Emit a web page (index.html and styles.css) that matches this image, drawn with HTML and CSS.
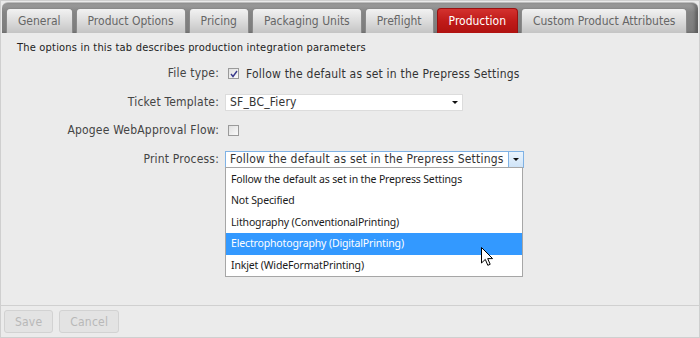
FILE: index.html
```html
<!DOCTYPE html>
<html lang="en">
<head>
  <meta charset="UTF-8">
  <title>Production</title>
  <link rel="stylesheet" href="styles.css">
</head>
<body>
  <div class="panel">
    <div class="tabbar">
      <div class="tab">General</div>
      <div class="tab">Product Options</div>
      <div class="tab">Pricing</div>
      <div class="tab">Packaging Units</div>
      <div class="tab">Preflight</div>
      <div class="tab active">Production</div>
      <div class="tab">Custom Product Attributes</div>
    </div>

    <div class="content">
      <div class="intro">The options in this tab describes production integration parameters</div>

      <div class="form">
        <div class="label">File type:</div>
        <div class="field">
          <span class="check checked">
            <svg width="8" height="8" viewBox="0 0 8 8"><path d="M1 4 L3 6.5 L7 1" fill="none" stroke="#3a3a8c" stroke-width="1.4"/></svg>
          </span>
          <span>Follow the default as set in the Prepress Settings</span>
        </div>

        <div class="label">Ticket Template:</div>
        <div class="field">
          <div class="select ticket">
            <span class="value">SF_BC_Fiery</span>
            <span class="arrow"></span>
          </div>
        </div>

        <div class="label">Apogee WebApproval Flow:</div>
        <div class="field">
          <span class="check"></span>
        </div>

        <div class="label">Print Process:</div>
        <div class="field">
          <div class="select process open">
            <span class="value">Follow the default as set in the Prepress Settings</span>
            <span class="button"><span class="arrow"></span></span>
            <ul class="options">
              <li>Follow the default as set in the Prepress Settings</li>
              <li>Not Specified</li>
              <li>Lithography (ConventionalPrinting)</li>
              <li class="hover">Electrophotography (DigitalPrinting)</li>
              <li>Inkjet (WideFormatPrinting)</li>
            </ul>
            <svg class="cursor" width="13" height="20" viewBox="0 0 13 20">
              <path d="M0.5 0.5 L0.5 16 L4.3 12.4 L6.8 18.3 L9.2 17.3 L6.7 11.6 L11.6 11.6 Z" fill="#fff" stroke="#000" stroke-width="1"/>
            </svg>
          </div>
        </div>
      </div>
    </div>

    <div class="buttons">
      <button disabled>Save</button>
      <button disabled>Cancel</button>
    </div>
  </div>
</body>
</html>
```

FILE: styles.css
```css
body {
  margin: 0;
  padding: 0;
  background: #ffffff;
  font-family: "DejaVu Sans Condensed", "DejaVu Sans", sans-serif;
  font-size: 12px;
  letter-spacing: 0.2px;
  color: #333333;
}
.panel {
  width: 698px;
  height: 336px;
  border: 1px solid #cfcfcf;
  background: #ebebeb;
  display: flex;
  flex-direction: column;
}
.tabbar {
  margin: 1px 1px 0 1px;
  height: 30px;
  border-radius: 6px 6px 0 0;
  background: linear-gradient(to bottom, #a0a0a0, #858585 30%, #7b7b7b);
  border-top: 1px solid #bdbdbd;
  display: flex;
  align-items: flex-end;
  gap: 3px;
  padding-left: 4px;
  box-shadow: inset -3px 0 3px rgba(0, 0, 0, 0.25);
}
.tab {
  height: 24px;
  line-height: 24px;
  padding: 0 11px;
  border: 1px solid #8a8a8a;
  border-bottom: none;
  border-radius: 4px 4px 0 0;
  background: linear-gradient(to bottom, #f2f2f2, #dcdcdc 50%, #c4c4c4);
  color: #666666;
  font-size: 12px;
  letter-spacing: 0;
  white-space: nowrap;
}
.tab.active {
  background: linear-gradient(to bottom, #d3322f, #c01b19 50%, #b01210);
  border-color: #9a1010;
  color: #ffffff;
}
.content {
  flex: 1;
  border-bottom: 1px solid #d0d0d0;
  padding: 8px 16px 0 16px;
  position: relative;
}
.intro {
  font-size: 11px;
  line-height: 14px;
  color: #222222;
}
.form {
  display: grid;
  grid-template-columns: 202px 1fr;
  column-gap: 6px;
  row-gap: 11.5px;
  margin-top: 10px;
  align-items: center;
}
.label {
  text-align: right;
  color: #444444;
  height: 17px;
  line-height: 17px;
}
.field {
  display: flex;
  align-items: center;
  height: 17px;
  color: #333333;
}
.check {
  width: 9px;
  height: 9px;
  border: 1px solid #9a9a9a;
  background: linear-gradient(to bottom right, #e0e0e0, #fafafa);
  margin: 0 7px 0 3px;
  display: flex;
  align-items: center;
  justify-content: center;
}
.select {
  position: relative;
  height: 15px;
  background: #ffffff;
  border: 1px solid #dcdcdc;
  display: flex;
  align-items: center;
  padding-left: 4px;
}
.select .value {
  flex: 1;
  line-height: 15px;
}
.arrow {
  width: 0;
  height: 0;
  border-left: 3px solid transparent;
  border-right: 3px solid transparent;
  border-top: 3px solid #111111;
}
.ticket {
  width: 232px;
}
.ticket .arrow {
  margin-right: 4px;
}
.process {
  width: 293px;
  border-color: #7fb2e5;
}
.process .button {
  width: 14px;
  height: 15px;
  border-left: 1px solid #7fb2e5;
  background: linear-gradient(to bottom, #eaf4fd, #cfe4f8);
  display: flex;
  align-items: center;
  justify-content: center;
}
.options {
  position: absolute;
  top: 15px;
  left: -1px;
  width: 296px;
  margin: 0;
  padding: 1px 0 0 0;
  list-style: none;
  background: #ffffff;
  border: 1px solid #a6a6a6;
  font-family: "Noto Sans", "Open Sans", sans-serif;
  font-size: 10.5px;
  letter-spacing: -0.15px;
  color: #1a1a1a;
  z-index: 2;
}
.options li {
  height: 21.6px;
  line-height: 21.6px;
  padding-left: 5px;
}
.options li.hover {
  background: #3399ff;
  color: #ffffff;
}
.cursor {
  position: absolute;
  top: 95px;
  left: 255px;
  z-index: 3;
}
.buttons {
  height: 31px;
  display: flex;
  align-items: center;
  gap: 6px;
  padding-left: 3px;
}
.buttons button {
  height: 23px;
  padding: 0 10px;
  border: 1px solid #d2d2d2;
  border-radius: 3px;
  background: #e3e3e3;
  color: #b8b8b8;
  font-family: "DejaVu Sans Condensed", "DejaVu Sans", sans-serif;
  font-size: 12px;
  letter-spacing: 0.2px;
}
```
